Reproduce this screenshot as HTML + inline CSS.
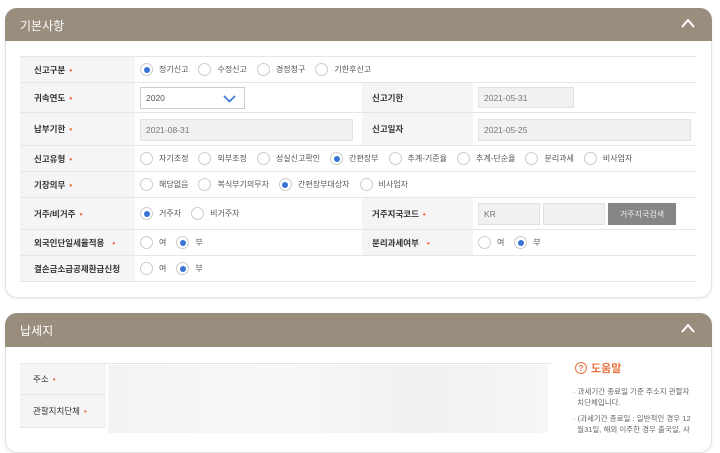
<!DOCTYPE html><html><head><meta charset="utf-8"><style>
*{box-sizing:border-box;margin:0;padding:0}
body{width:720px;height:433px;overflow:hidden;background:#fff;font-family:"Liberation Sans","Noto Sans CJK KR",sans-serif;font-size:9px;color:#444;position:relative}
.card{position:absolute;left:5px;width:707px;border:1px solid #e3e3e3;border-radius:12px;background:#fff;box-shadow:0 1px 3px rgba(0,0,0,.08)}
.hd{position:absolute;left:5px;width:707px;height:33px;background:#998e7e;border-radius:12px 12px 0 0;color:#fff;font-size:12px;padding:9px 0 0 15px}
.chev{position:absolute;right:16px;top:9px;width:16px;height:12px}
.r{position:absolute;left:20px;width:676px;border-bottom:1px solid #e6e6e6}
.l{position:absolute;left:0;top:0;bottom:0;width:115px;background:#f5f5f5;padding-left:14px;display:flex;align-items:center;color:#333;font-weight:bold;font-size:8.5px}
.l2{position:absolute;left:342px;top:0;bottom:0;width:111px;background:#f5f5f5;padding-left:10px;display:flex;align-items:center;color:#333;font-weight:bold;font-size:8.5px}
.s{color:#f26a3b;margin-left:4px}
.v{position:absolute;top:0;bottom:0;display:flex;align-items:center}
.rd{width:13px;height:13px;border:1px solid #ccc;border-radius:50%;display:inline-block;margin-right:6px;position:relative;background:#fff}
.rd.on::after{content:"";position:absolute;left:2.5px;top:2.5px;width:6px;height:6px;border-radius:50%;background:#3a74d6}
.o{display:inline-flex;align-items:center;margin-right:10px;font-size:8px;color:#555}
.in{position:absolute;background:#f1f1f1;border:1px solid #e2e2e2;color:#777;font-size:8.5px;padding-left:5px;display:flex;align-items:center}
</style></head><body>
<div class="card" style="top:8px;height:290px"></div>
<div class="hd" style="top:8px">기본사항<svg class="chev" viewBox="0 0 16 12"><path d="M2 10L8 3L14 10" stroke="#fff" stroke-width="2" fill="none"/></svg></div>
<div style="position:absolute;left:20px;top:56px;width:676px;border-top:1px solid #e6e6e6"></div>

<div class="r" style="top:57px;height:26px"><div class="l">신고구분<span class="s">•</span></div>
<div class="v" style="left:120px"><span class="o"><i class="rd on"></i>정기신고</span><span class="o"><i class="rd"></i>수정신고</span><span class="o"><i class="rd"></i>경정청구</span><span class="o"><i class="rd"></i>기한후신고</span></div></div>

<div class="r" style="top:83px;height:30px"><div class="l">귀속연도<span class="s">•</span></div>
<div class="in" style="left:120px;top:4px;width:105px;height:22px;background:#fff;border-color:#ccc;color:#555">2020<svg style="position:absolute;right:8px;top:7px" width="13" height="8" viewBox="0 0 13 8"><path d="M1 1L6.5 6.5L12 1" stroke="#3a74d6" stroke-width="1.6" fill="none"/></svg></div>
<div class="l2">신고기한</div>
<div class="in" style="left:458px;top:4px;width:96px;height:21px">2021-05-31</div></div>

<div class="r" style="top:113px;height:33px"><div class="l">납부기한<span class="s">•</span></div>
<div class="in" style="left:120px;top:6px;width:213px;height:22px">2021-08-31</div>
<div class="l2">신고일자</div>
<div class="in" style="left:458px;top:6px;width:213px;height:22px">2021-05-25</div></div>

<div class="r" style="top:146px;height:26px"><div class="l">신고유형<span class="s">•</span></div>
<div class="v" style="left:120px"><span class="o"><i class="rd"></i>자기조정</span><span class="o"><i class="rd"></i>외부조정</span><span class="o"><i class="rd"></i>성실신고확인</span><span class="o"><i class="rd on"></i>간편장부</span><span class="o"><i class="rd"></i>추계-기준율</span><span class="o"><i class="rd"></i>추계-단순율</span><span class="o"><i class="rd"></i>분리과세</span><span class="o"><i class="rd"></i>비사업자</span></div></div>

<div class="r" style="top:172px;height:26px"><div class="l">기장의무<span class="s">•</span></div>
<div class="v" style="left:120px"><span class="o"><i class="rd"></i>해당없음</span><span class="o"><i class="rd"></i>복식부기의무자</span><span class="o"><i class="rd on"></i>간편장부대상자</span><span class="o"><i class="rd"></i>비사업자</span></div></div>

<div class="r" style="top:198px;height:32px"><div class="l">거주/비거주<span class="s">•</span></div>
<div class="v" style="left:120px"><span class="o"><i class="rd on"></i>거주자</span><span class="o"><i class="rd"></i>비거주자</span></div>
<div class="l2">거주지국코드<span class="s">•</span></div>
<div class="in" style="left:458px;top:5px;width:62px;height:22px">KR</div>
<div class="in" style="left:523px;top:5px;width:62px;height:22px"></div>
<div style="position:absolute;left:588px;top:5px;width:68px;height:22px;background:#868686;color:#eee;font-size:8px;display:flex;align-items:center;justify-content:center">거주지국검색</div></div>

<div class="r" style="top:230px;height:26px"><div class="l">외국인단일세율적용<span class="s" style="margin-left:8px">•</span></div>
<div class="v" style="left:120px"><span class="o"><i class="rd"></i>여</span><span class="o"><i class="rd on"></i>부</span></div>
<div class="l2">분리과세여부<span class="s" style="margin-left:8px">•</span></div>
<div class="v" style="left:458px"><span class="o"><i class="rd"></i>여</span><span class="o"><i class="rd on"></i>부</span></div></div>

<div class="r" style="top:256px;height:26px"><div class="l">결손금소급공제환급신청</div>
<div class="v" style="left:120px"><span class="o"><i class="rd"></i>여</span><span class="o"><i class="rd on"></i>부</span></div></div>

<div class="card" style="top:313px;height:140px"></div>
<div class="hd" style="top:313px;height:34px">납세지<svg class="chev" viewBox="0 0 16 12"><path d="M2 10L8 3L14 10" stroke="#fff" stroke-width="2" fill="none"/></svg></div>
<div style="position:absolute;left:20px;top:363px;width:533px;border-top:1px solid #e6e6e6"></div>
<div style="position:absolute;left:20px;top:364px;width:86px;height:31px;background:#f5f5f5;border-bottom:1px solid #e6e6e6;padding-left:13px;display:flex;align-items:center;font-size:8.5px;color:#333">주소<span class="s">•</span></div>
<div style="position:absolute;left:20px;top:395px;width:86px;height:33px;background:#f5f5f5;border-bottom:1px solid #e6e6e6;padding-left:13px;display:flex;align-items:center;font-size:8.5px;color:#333">관할지치단체<span class="s">•</span></div>
<div style="position:absolute;left:108px;top:365px;width:440px;height:68px;background:linear-gradient(90deg,#f3f3f3,#f8f8f8 40%,#f0f0f0 70%,#f6f6f6)"></div>
<div style="position:absolute;left:575px;top:360px;color:#e8723f;font-size:11px;font-weight:bold;display:flex;align-items:center"><span style="width:12px;height:12px;border:1.3px solid #e8723f;border-radius:50%;font-size:8px;display:inline-flex;align-items:center;justify-content:center;margin-right:4px">?</span>도움말</div>
<div style="position:absolute;left:573px;top:386px;width:130px;font-size:7.5px;color:#666;line-height:11px">· 과세기간 종료일 기준 주소지 관할자<br>&nbsp;&nbsp;치단체입니다.<br><div style="height:5px"></div>· (과세기간 종료일 : 일반적인 경우 12<br>&nbsp;&nbsp;월31일, 해외 이주한 경우 출국일, 사</div>
</body></html>
